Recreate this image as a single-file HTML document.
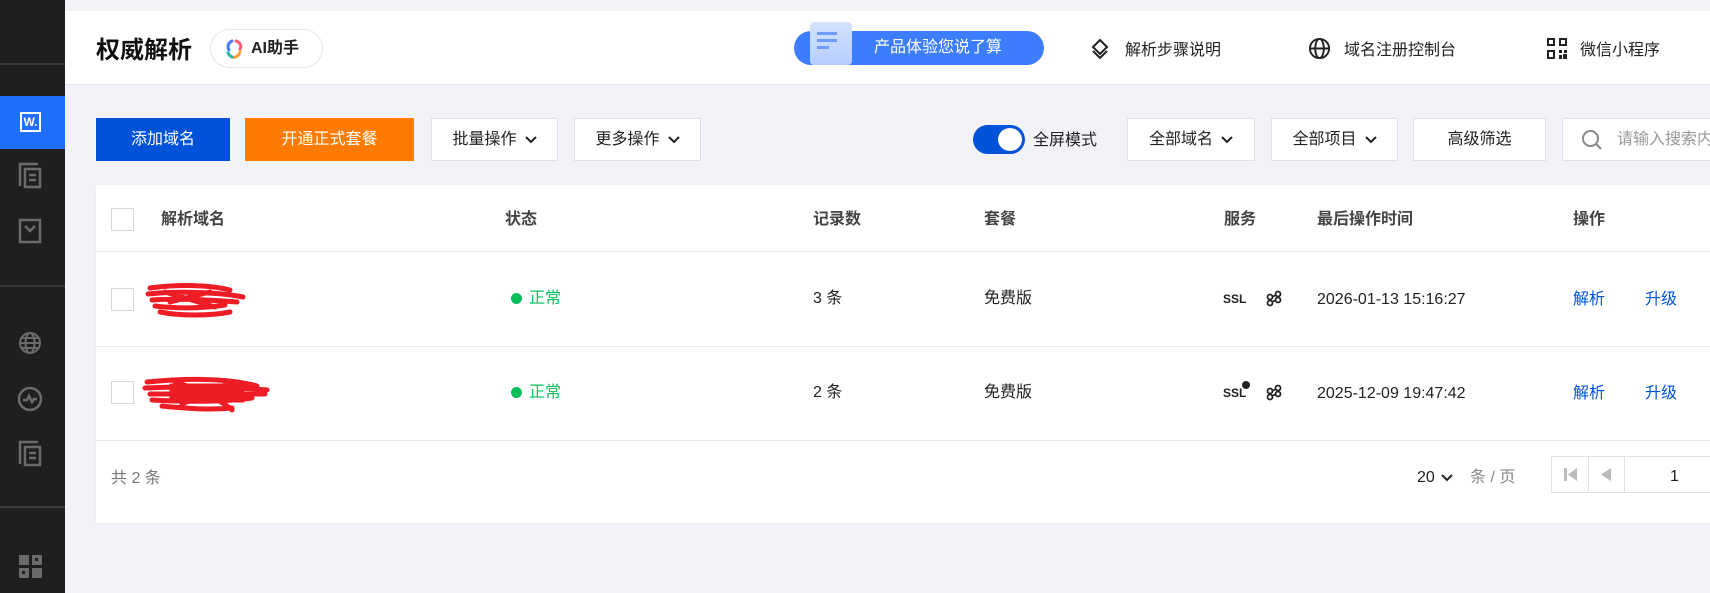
<!DOCTYPE html>
<html><head><meta charset="utf-8"><style>
*{box-sizing:border-box;margin:0;padding:0}
body{width:1710px;height:593px;overflow:hidden;background:#f2f3f8;font-family:"Liberation Sans","Noto Sans CJK SC",sans-serif;font-size:16px;line-height:20px;color:#222;position:relative}
.a{position:absolute;white-space:nowrap}
.sb{left:0;top:0;width:65px;height:593px;background:#1f1f1f}
.line{left:0;width:65px;height:2px;background:#3a3a3a}
.hdr{left:65px;top:11px;width:1645px;height:74px;background:#fff;border-bottom:1px solid #e4e6eb}
.btn{height:43px;top:118px;display:flex;align-items:center;justify-content:center;font-size:16px}
.wb{background:#fff;border:1px solid #dfe1e6;color:#222}
.card{left:96px;top:185px;width:1614px;height:338px;background:#fff;box-shadow:0 1px 3px rgba(0,0,0,.05)}
.th{font-weight:bold;color:#444;top:210px}
.cb{width:23px;height:23px;border:1px solid #d5d8df;background:#fff;left:111px}
.hl{left:96px;width:1614px;height:1px;background:#e8e9ec}
.g{color:#0abf5b}
.lk{color:#0052d9}
.chev{margin-left:8px}
</style></head><body>
<div class="a" style="left:65px;top:0;width:1645px;height:11px;background:#f3f4f7"></div>
<div class="a sb"></div>
<div class="a line" style="top:63px"></div>
<div class="a line" style="top:285px"></div>
<div class="a line" style="top:506px"></div>
<div class="a" style="left:0;top:96px;width:65px;height:53px;background:#1f6fff"></div>
<div class="a" style="left:20px;top:112px;width:21px;height:20px;border:2px solid #fff;color:#fff;font-size:12px;font-weight:bold;line-height:16px;text-align:center">W.</div>
<svg class="a" style="left:18px;top:162px" width="26" height="28" viewBox="0 0 26 28" fill="none" stroke="#6b6b6b" stroke-width="2.5"><path d="M2 24V2h18"/><rect x="7" y="7" width="15" height="18"/><path d="M11 13h7M11 18h7"/></svg>
<svg class="a" style="left:18px;top:218px" width="24" height="26" viewBox="0 0 24 26" fill="none" stroke="#6b6b6b" stroke-width="2.5"><rect x="2" y="2" width="20" height="22"/><path d="M7 8l5 5 5-5"/></svg>
<svg class="a" style="left:18px;top:331px" width="24" height="24" viewBox="0 0 24 24" fill="none" stroke="#6b6b6b" stroke-width="2"><circle cx="12" cy="12" r="10"/><ellipse cx="12" cy="12" rx="4.5" ry="10"/><path d="M2 12h20M4 7h16M4 17h16"/></svg>
<svg class="a" style="left:17px;top:386px" width="26" height="26" viewBox="0 0 26 26" fill="none" stroke="#6b6b6b" stroke-width="2.5"><circle cx="13" cy="13" r="11"/><path d="M6 14h4l2-4 3 6 2-3h3"/></svg>
<svg class="a" style="left:18px;top:440px" width="26" height="28" viewBox="0 0 26 28" fill="none" stroke="#6b6b6b" stroke-width="2.5"><path d="M2 24V2h18"/><rect x="7" y="7" width="15" height="18"/><path d="M11 13h7M11 18h7"/></svg>
<svg class="a" style="left:19px;top:555px" width="23" height="23" viewBox="0 0 23 23" fill="#6b6b6b"><rect x="0" y="0" width="10" height="10"/><rect x="13" y="0" width="10" height="10"/><rect x="0" y="13" width="10" height="10"/><rect x="13" y="13" width="10" height="10"/><rect x="16" y="3" width="3" height="3" fill="#1f1f1f"/><rect x="3" y="16" width="3" height="3" fill="#1f1f1f"/></svg>

<div class="a hdr"></div>
<div class="a" style="left:96px;top:37px;font-size:24px;line-height:28px;font-weight:bold;color:#111">权威解析</div>
<div class="a" style="left:210px;top:29px;width:113px;height:39px;border:1px solid #e3e5ea;border-radius:20px;display:flex;align-items:center;padding-left:12px;font-weight:bold;font-size:16px"><svg width="22" height="22" viewBox="0 0 22 22" fill="none" stroke-width="3" stroke-linecap="round"><path d="M9 3c-4 2-5 6-3 9" stroke="#4a7bff"/><path d="M13 3c4 1 6 5 4 8" stroke="#ff5a7a"/><path d="M17 14c-1 4-5 6-8 5" stroke="#ff9f2e"/><path d="M5 15c1 2 2 3 4 4" stroke="#22b5a0"/></svg><span style="margin-left:6px">AI助手</span></div>
<div class="a" style="left:794px;top:31px;width:250px;height:34px;border-radius:17px;background:#3d7dff;color:#fff;font-size:16px;line-height:34px;padding-left:80px">产品体验您说了算</div>
<div class="a" style="left:810px;top:22px;width:42px;height:43px;background:linear-gradient(#d4e2ff,#b6ceff);border-radius:4px"></div>
<div class="a" style="left:817px;top:32px;width:20px;height:3px;background:#6f9cff"></div>
<div class="a" style="left:817px;top:39px;width:20px;height:3px;background:#6f9cff"></div>
<div class="a" style="left:817px;top:46px;width:12px;height:3px;background:#6f9cff"></div>
<svg class="a" style="left:1090px;top:38px" width="20" height="22" viewBox="0 0 20 22" fill="none" stroke="#222" stroke-width="2"><path d="M10 2l7 7-7 7-7-7z"/><path d="M3 13l7 7 7-7"/></svg>
<div class="a" style="left:1125px;top:41px">解析步骤说明</div>
<svg class="a" style="left:1308px;top:37px" width="23" height="23" viewBox="0 0 24 24" fill="none" stroke="#222" stroke-width="2"><circle cx="12" cy="12" r="10"/><ellipse cx="12" cy="12" rx="4.5" ry="10"/><path d="M2 12h20"/></svg>
<div class="a" style="left:1344px;top:41px">域名注册控制台</div>
<svg class="a" style="left:1547px;top:38px" width="20" height="21" viewBox="0 0 20 21" fill="#222"><path d="M0 0h8v8H0zM2 2v4h4V2zM12 0h8v8h-8zm2 2v4h4V2zM0 12h8v9H0zm2 2v5h4v-5zM12 12h3v3h-3zM17 12h3v3h-3zM12 17h3v4h-3zM16 16h4v5h-4z"/></svg>
<div class="a" style="left:1580px;top:41px">微信小程序</div>

<div class="a btn" style="left:96px;width:134px;background:#0052d9;color:#fff">添加域名</div>
<div class="a btn" style="left:245px;width:169px;background:#ff7b00;color:#fff">开通正式套餐</div>
<div class="a btn wb" style="left:431px;width:127px">批量操作<svg class="chev" width="12" height="8" viewBox="0 0 12 8" fill="none" stroke="#222" stroke-width="2"><path d="M1 1l5 5 5-5"/></svg></div>
<div class="a btn wb" style="left:574px;width:127px">更多操作<svg class="chev" width="12" height="8" viewBox="0 0 12 8" fill="none" stroke="#222" stroke-width="2"><path d="M1 1l5 5 5-5"/></svg></div>
<div class="a" style="left:973px;top:125px;width:52px;height:29px;border-radius:15px;background:#0052d9"></div>
<div class="a" style="left:998px;top:128px;width:24px;height:23px;border-radius:50%;background:#fff"></div>
<div class="a" style="left:1033px;top:131px">全屏模式</div>
<div class="a btn wb" style="left:1127px;width:128px">全部域名<svg class="chev" width="12" height="8" viewBox="0 0 12 8" fill="none" stroke="#222" stroke-width="2"><path d="M1 1l5 5 5-5"/></svg></div>
<div class="a btn wb" style="left:1271px;width:127px">全部项目<svg class="chev" width="12" height="8" viewBox="0 0 12 8" fill="none" stroke="#222" stroke-width="2"><path d="M1 1l5 5 5-5"/></svg></div>
<div class="a btn wb" style="left:1413px;width:133px">高级筛选</div>
<div class="a btn wb" style="left:1562px;width:170px;justify-content:flex-start;padding-left:18px;color:#999"><svg width="22" height="22" viewBox="0 0 22 22" fill="none" stroke="#888" stroke-width="2"><circle cx="9.5" cy="9.5" r="7.5"/><path d="M15 15l5 5"/></svg><span style="margin-left:14px">请输入搜索内容</span></div>

<div class="a card"></div>
<div class="a cb" style="top:208px"></div>
<div class="a th" style="left:161px">解析域名</div>
<div class="a th" style="left:505px">状态</div>
<div class="a th" style="left:813px">记录数</div>
<div class="a th" style="left:984px">套餐</div>
<div class="a th" style="left:1224px">服务</div>
<div class="a th" style="left:1317px">最后操作时间</div>
<div class="a th" style="left:1573px">操作</div>
<div class="a hl" style="top:251px"></div>
<div class="a hl" style="top:346px"></div>
<div class="a hl" style="top:440px"></div>

<div class="a cb" style="top:288px"></div>
<svg class="a" style="left:140px;top:282px" width="110" height="40" viewBox="0 0 110 40" fill="none" stroke="#ee1c25" stroke-width="5" stroke-linecap="round"><path d="M10 6c30-4 60-3 80 2M8 12c30-3 70-2 95 3M12 18c30-2 60 0 85 2M15 24c25 3 50 2 70-1M20 30c20 4 50 4 70 0M25 10l50 15M30 20l40-10"/></svg>
<div class="a g" style="left:511px;top:293px;width:11px;height:11px;border-radius:50%;background:#0abf5b"></div>
<div class="a g" style="left:529px;top:289px">正常</div>
<div class="a" style="left:813px;top:289px">3 条</div>
<div class="a" style="left:984px;top:289px">免费版</div>
<div class="a" style="left:1223px;top:292px;font-size:12px;font-weight:bold;line-height:14px">SSL</div>
<svg class="a" style="left:1266px;top:289px" width="16" height="18" viewBox="0 0 16 18" fill="none" stroke="#222" stroke-width="1.8"><circle cx="4" cy="8" r="2.5"/><circle cx="4" cy="14" r="2.5"/><circle cx="12" cy="5" r="2.5"/><circle cx="12" cy="11" r="2.5"/><path d="M6 8l4-2M6 13l4-2"/></svg>
<div class="a" style="left:1317px;top:290px">2026-01-13 15:16:27</div>
<div class="a lk" style="left:1573px;top:290px">解析</div>
<div class="a lk" style="left:1645px;top:290px">升级</div>

<div class="a cb" style="top:381px"></div>
<svg class="a" style="left:142px;top:374px" width="130" height="42" viewBox="0 0 130 42" fill="none" stroke="#ee1c25" stroke-width="5" stroke-linecap="round"><path d="M5 8c40-4 80-4 110 4M3 14c40-2 90-1 122 2M8 20c40 0 80 0 115 0M10 26c40 2 70 2 100-2M20 32c30 3 50 4 70 2M30 6c20 8 50 20 60 30M40 30l50-22"/><path d="M30 12h70v14H30z" fill="#ee1c25"/></svg>
<div class="a g" style="left:511px;top:387px;width:11px;height:11px;border-radius:50%;background:#0abf5b"></div>
<div class="a g" style="left:529px;top:383px">正常</div>
<div class="a" style="left:813px;top:383px">2 条</div>
<div class="a" style="left:984px;top:383px">免费版</div>
<div class="a" style="left:1223px;top:386px;font-size:12px;font-weight:bold;line-height:14px">SSL</div>
<div class="a" style="left:1242px;top:381px;width:8px;height:8px;border-radius:50%;background:#222"></div>
<svg class="a" style="left:1266px;top:383px" width="16" height="18" viewBox="0 0 16 18" fill="none" stroke="#222" stroke-width="1.8"><circle cx="4" cy="8" r="2.5"/><circle cx="4" cy="14" r="2.5"/><circle cx="12" cy="5" r="2.5"/><circle cx="12" cy="11" r="2.5"/><path d="M6 8l4-2M6 13l4-2"/></svg>
<div class="a" style="left:1317px;top:384px">2025-12-09 19:47:42</div>
<div class="a lk" style="left:1573px;top:384px">解析</div>
<div class="a lk" style="left:1645px;top:384px">升级</div>

<div class="a" style="left:111px;top:469px;color:#777">共 2 条</div>
<div class="a" style="left:1417px;top:468px;display:flex;align-items:center">20<svg style="margin-left:6px" width="12" height="8" viewBox="0 0 12 8" fill="none" stroke="#222" stroke-width="2"><path d="M1 1l5 5 5-5"/></svg></div>
<div class="a" style="left:1470px;top:468px;color:#888">条 / 页</div>
<div class="a" style="left:1551px;top:456px;width:170px;height:37px;border:1px solid #dfe1e6;background:#fff"></div>
<div class="a" style="left:1588px;top:456px;width:1px;height:37px;background:#dfe1e6"></div>
<div class="a" style="left:1624px;top:456px;width:1px;height:37px;background:#dfe1e6"></div>
<svg class="a" style="left:1564px;top:468px" width="13" height="13" viewBox="0 0 13 13" fill="#bbb"><rect x="0" y="0" width="3" height="13"/><path d="M13 0v13L4 6.5z"/></svg>
<svg class="a" style="left:1600px;top:468px" width="11" height="13" viewBox="0 0 11 13" fill="#bbb"><path d="M11 0v13L1 6.5z"/></svg>
<div class="a" style="left:1670px;top:467px">1</div>
</body></html>
